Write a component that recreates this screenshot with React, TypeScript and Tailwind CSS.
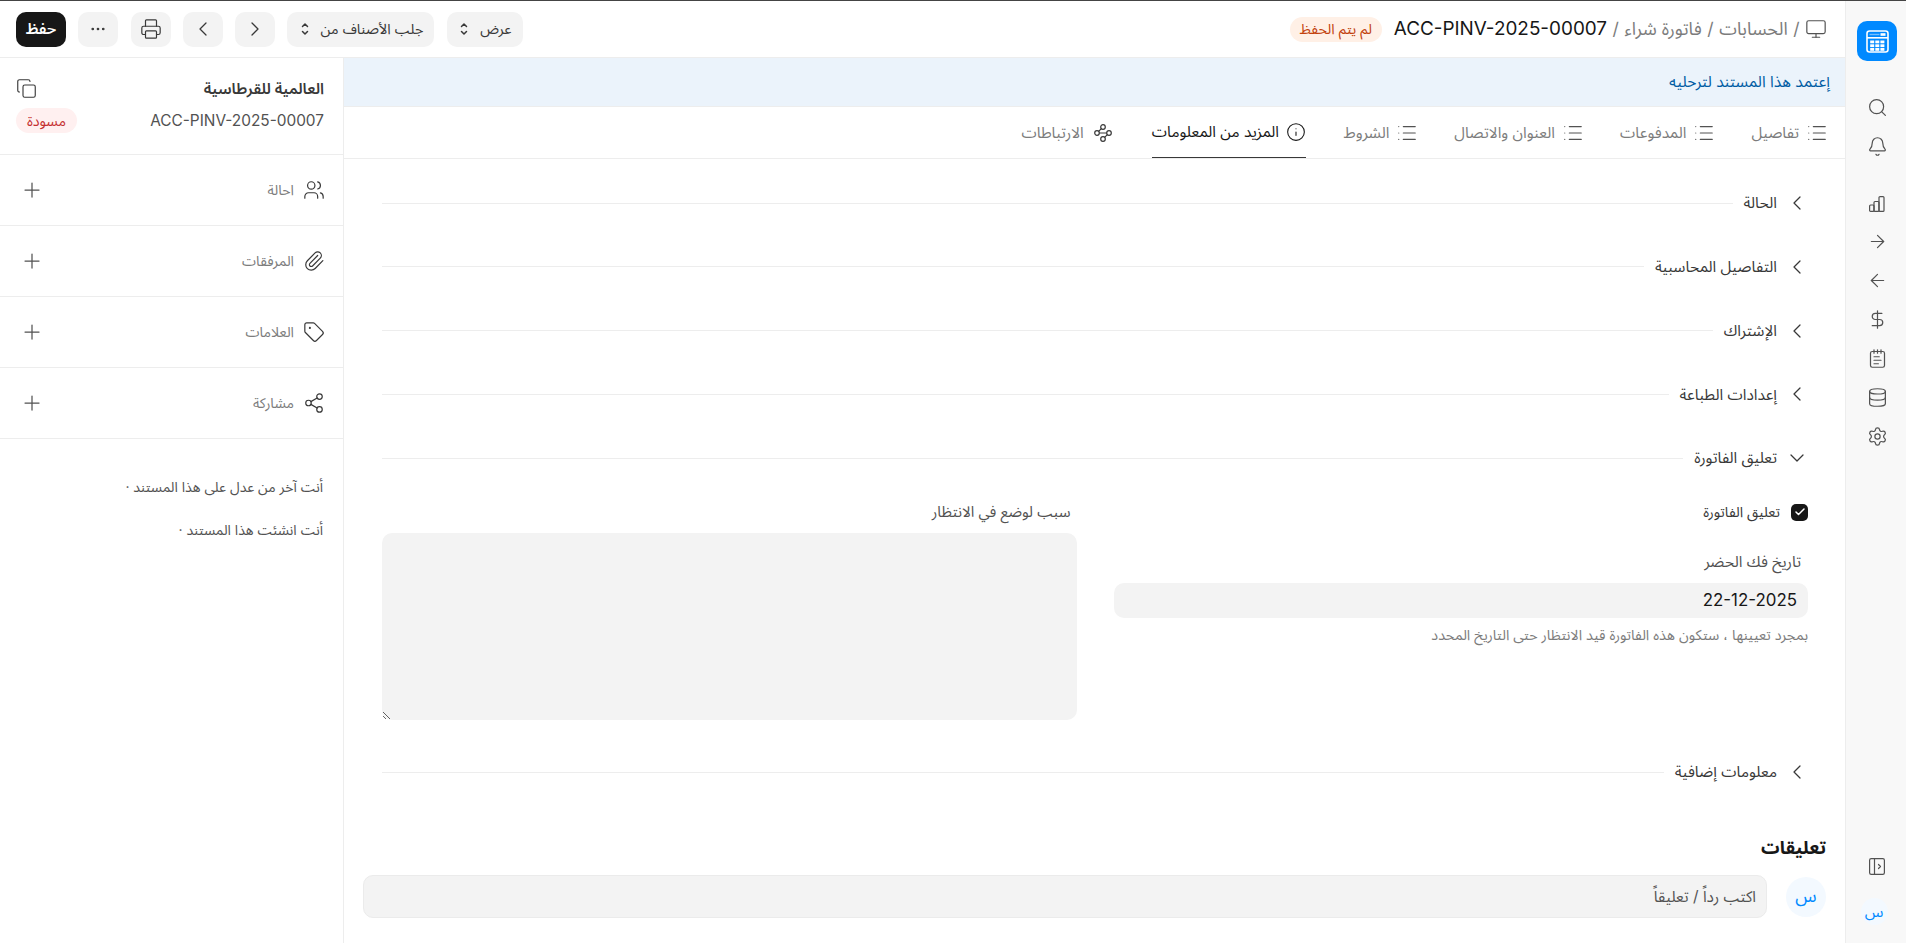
import React from "react";
import {
  Monitor, Search, Bell, ArrowRight, ArrowLeft, DollarSign, NotepadText, Database, Settings,
  ChevronLeft, ChevronRight, ChevronDown, Printer, Ellipsis, Copy, Users, Paperclip, Tag, Share2, Plus, List, Info, Check,
} from "lucide-react";

const FONT = "font-['Inter','Noto_Sans_Arabic','Noto_Sans','DejaVu_Sans',sans-serif]";

function UpDown() {
  return (
    <svg width="12" height="18" viewBox="0 0 12 18" fill="none" stroke="#383838" strokeWidth="1.5" strokeLinecap="round" strokeLinejoin="round">
      <path d="M3.5 6.5 6 4l2.5 2.5M3.5 11.5 6 14l2.5-2.5" />
    </svg>
  );
}

function Bars() {
  return (
    <svg width="16" height="18" viewBox="0 0 16 18" fill="none" stroke="#525252" strokeWidth="1.2">
      <rect x="0.6" y="10" width="4.4" height="6.4" rx="1" />
      <rect x="5" y="6.5" width="5" height="9.9" rx="1" />
      <rect x="10" y="1.6" width="5" height="14.8" rx="1" />
    </svg>
  );
}

function Links() {
  return (
    <svg width="18" height="18" viewBox="0 0 18 18" fill="none" stroke="#383838" strokeWidth="1.2">
      <circle cx="9" cy="3" r="2.3" />
      <circle cx="3" cy="9" r="2.3" />
      <circle cx="15" cy="9" r="2.3" />
      <circle cx="9" cy="15" r="2.3" />
      <path d="M5.3 9h7.4M7.4 4.6 4.6 7.4M13.4 10.6l-2.8 2.8" />
    </svg>
  );
}

function Toggle() {
  return (
    <svg width="16" height="17" viewBox="0 0 16 17" fill="none" stroke="#525252" strokeWidth="1.2" strokeLinejoin="round">
      <rect x="0.6" y="0.6" width="14.8" height="15.8" rx="1.6" />
      <path d="M5.5 0.6v15.8" />
      <path d="m9.5 6.5 2 2-2 2" strokeLinecap="round" />
    </svg>
  );
}

function Logo() {
  return (
    <div className="w-[40px] h-[40px] rounded-[10px] bg-[#0089ff] flex items-center justify-center">
      <svg width="23" height="23" viewBox="0 0 23 23" fill="none">
        <rect x="1" y="1" width="21" height="21" rx="2.5" stroke="#fff" strokeWidth="1.6" />
        <rect x="1" y="7" width="21" height="1.6" fill="#fff" />
        <rect x="14.5" y="3.2" width="5" height="2.6" fill="#fff" />
        <rect x="3.5" y="3.8" width="10" height="1.4" fill="#fff" fillOpacity="0.45" />
        {[10.5, 14.3, 18].map((y) =>
          [4.2, 9.3, 14.4].map((x) => <rect key={`${x}-${y}`} x={x} y={y} width="4" height="2.8" fill="#fff" />)
        )}
      </svg>
    </div>
  );
}

function Rail() {
  const c = { size: 21, strokeWidth: 1.4, color: "#525252" };
  return (
    <aside className="w-[61px] shrink-0 bg-[#f8f8f8] border-l border-[#ededed] flex flex-col items-center pl-[2px] pt-[20px] pb-[18px]">
      <Logo />
      <div className="mt-[36px] flex flex-col items-center gap-[18px]">
        <Search {...c} />
        <Bell {...c} />
      </div>
      <div className="mt-[38px] flex flex-col items-center gap-[18px]">
        <Bars />
        <ArrowRight {...c} />
        <ArrowLeft {...c} />
        <DollarSign {...c} />
        <NotepadText {...c} />
        <Database {...c} />
        <Settings {...c} />
      </div>
      <div className="mt-auto flex flex-col items-center gap-[23px]">
        <Toggle />
        <div className="w-[27px] h-[27px] mr-[6px] rounded-full bg-[#f3f9ff] text-[#0089ff] text-[15.4px] flex items-center justify-center">س</div>
      </div>
    </aside>
  );
}

function Btn({ children, className = "" }: { children: React.ReactNode; className?: string }) {
  return <div className={`h-[35px] rounded-[10px] bg-[#f3f3f3] flex items-center justify-center text-[#383838] text-[14.4px] ${className}`}>{children}</div>;
}

function Header() {
  const ic = { size: 24, strokeWidth: 1.25, color: "#383838" };
  return (
    <header className="h-[57px] shrink-0 border-b border-[#ededed] flex items-center pr-[18px] pl-[16px]">
      <div className="flex items-center gap-[5.5px] text-[17.9px] text-[#7c7c7c]">
        <Monitor size={22} strokeWidth={1.3} color="#525252" />
        <span className="text-[17.6px]">/</span>
        <span>الحسابات</span>
        <span className="text-[17.6px]">/</span>
        <span>فاتورة شراء</span>
        <span className="text-[17.6px]">/</span>
        <span className="text-[18.9px] text-[#171717]">ACC-PINV-2025-00007</span>
      </div>
      <span className="mr-[12px] h-[25px] w-[92px] rounded-full bg-[#fff0e6] text-[#c2410c] text-[14.3px] flex items-center justify-center">لم يتم الحفظ</span>
      <div className="mr-auto flex items-center gap-[12.3px]">
        <Btn className="w-[76px] gap-[10px]"><span>عرض</span><UpDown /></Btn>
        <Btn className="w-[147px] gap-[10px]"><span>جلب الأصناف من</span><UpDown /></Btn>
        <Btn className="w-[40px]"><ChevronRight {...ic} /></Btn>
        <Btn className="w-[40px]"><ChevronLeft {...ic} /></Btn>
        <Btn className="w-[40px]"><Printer size={22} strokeWidth={1.3} color="#383838" /></Btn>
        <Btn className="w-[40px]"><Ellipsis size={18} strokeWidth={1.6} color="#383838" /></Btn>
        <div className="w-[50px] h-[35px] rounded-[10px] bg-[#171717] text-white text-[15.4px] font-semibold flex items-center justify-center">حفظ</div>
      </div>
    </header>
  );
}

function Tabs() {
  const ic = { size: 22, strokeWidth: 1.25, color: "#525252" };
  const items: [string, React.ReactNode, string][] = [
    ["تفاصيل", <List {...ic} />, "gap-[7px] text-[#7c7c7c]"],
    ["المدفوعات", <List {...ic} />, "gap-[7px] text-[#7c7c7c]"],
    ["العنوان والاتصال", <List {...ic} />, "gap-[7px] text-[#7c7c7c]"],
    ["الشروط", <List {...ic} />, "gap-[7px] text-[#7c7c7c]"],
    ["المزيد من المعلومات", <Info size={20} strokeWidth={1.3} color="#171717" />, "gap-[7px] mr-[1.5px] text-[#171717] border-b-[1.5px] border-[#383838]"],
    ["الارتباطات", <Links />, "gap-[10.5px] mr-[3.5px] text-[#7c7c7c]"],
  ];
  return (
    <div className="h-[52px] shrink-0 border-b border-[#ededed] flex pr-[17px] gap-[36px]">
      {items.map(([t, icon, cls]) => (
        <div key={t} className={`h-[51px] flex items-center text-[15.4px] ${cls}`}>
          {icon}
          <span>{t}</span>
        </div>
      ))}
    </div>
  );
}

function Section({ title, open = false, className = "" }: { title: string; open?: boolean; className?: string }) {
  return (
    <div className={`h-[24px] flex items-center ${className}`}>
      {open ? (
        <ChevronDown size={24} strokeWidth={1.25} color="#383838" className="-mr-px" />
      ) : (
        <ChevronLeft size={24} strokeWidth={1.25} color="#383838" className="-mr-px" />
      )}
      <span className="mr-[8px] text-[15.4px] text-[#383838] whitespace-nowrap">{title}</span>
      <div className="flex-1 h-px bg-[#ededed] mr-[11px]" />
    </div>
  );
}

function Form() {
  return (
    <div className="pr-[37px] pl-[38px] pt-[32px]">
      <Section title="الحالة" className="mb-[39.75px]" />
      <Section title="التفاصيل المحاسبية" className="mb-[39.75px]" />
      <Section title="الإشتراك" className="mb-[39.75px]" />
      <Section title="إعدادات الطباعة" className="mb-[39.75px]" />
      <Section title="تعليق الفاتورة" open />
      <div className="grid grid-cols-2 gap-[37px] mt-[30px]">
        <div>
          <label className="flex items-center gap-[11px] h-[24px] text-[14.3px] text-[#383838]">
            <span className="w-[17px] h-[17px] rounded-[5px] bg-[#171717] flex items-center justify-center">
              <Check size={12} strokeWidth={3} color="#fff" />
            </span>
            تعليق الفاتورة
          </label>
          <div className="mt-[26px] pr-[7px] h-[24px] text-[15.4px] text-[#525252] flex items-center">تاريخ فك الحضر</div>
          <div className="mt-[9px] h-[35px] rounded-[10px] bg-[#f3f3f3] px-[11px] flex items-center text-[16.9px] text-[#171717]">
            <span dir="ltr">22-12-2025</span>
          </div>
          <p className="mt-[6px] text-[14.3px] text-[#7c7c7c]">بمجرد تعيينها ، ستكون هذه الفاتورة قيد الانتظار حتى التاريخ المحدد</p>
        </div>
        <div>
          <div className="pr-[6px] h-[24px] text-[15px] text-[#525252] flex items-center">سبب لوضع في الانتظار</div>
          <textarea className="block mt-[9px] w-full h-[187px] rounded-[10px] bg-[#f3f3f3] outline-none" />
        </div>
      </div>
      <Section title="معلومات إضافية" className="mt-[40px]" />
    </div>
  );
}

function Comments() {
  return (
    <div className="px-[19px] mt-[48px]">
      <h2 className="text-[18.4px] leading-[30px] font-bold text-[#171717]">تعليقات</h2>
      <div className="mt-[13px] flex items-center gap-[19px]">
        <div className="w-[40px] h-[40px] rounded-full bg-[#f3f9ff] text-[#0089ff] text-[17.6px] flex items-center justify-center shrink-0">س</div>
        <div className="flex-1 h-[43px] rounded-[10px] bg-[#f3f3f3] border border-[#ebebeb] px-[10px] flex items-center text-[15.4px] text-[#525252]">
          اكتب رداً / تعليقاً
        </div>
      </div>
    </div>
  );
}

function SideRow({ icon, label }: { icon: React.ReactNode; label: string }) {
  return (
    <div className="h-[71px] border-b border-[#ededed] flex items-center pr-[18px] pl-[20px] gap-[9px] text-[14.2px] text-[#7c7c7c]">
      {icon}
      <span>{label}</span>
      <Plus size={24} strokeWidth={1.25} color="#525252" className="mr-auto" />
    </div>
  );
}

function Side() {
  const ic = { size: 22, strokeWidth: 1.3, color: "#383838" };
  return (
    <aside className="w-[344px] shrink-0 border-r border-[#ededed]">
      <div className="h-[97px] border-b border-[#ededed] pr-[19px] pl-[16px] pt-[20px]">
        <div className="flex items-center justify-between h-[21px]">
          <span className="text-[15.4px] font-semibold text-[#383838]">العالمية للقرطاسية</span>
          <Copy size={21} strokeWidth={1.3} color="#383838" />
        </div>
        <div className="flex items-center justify-between mt-[9px] h-[25px]">
          <span className="text-[15.4px] text-[#525252]">ACC-PINV-2025-00007</span>
          <span className="w-[61px] h-[25px] rounded-full bg-[#fff0f0] text-[#c53030] text-[14.3px] flex items-center justify-center">مسودة</span>
        </div>
      </div>
      <SideRow icon={<Users {...ic} />} label="احالة" />
      <SideRow icon={<Paperclip {...ic} />} label="المرفقات" />
      <SideRow icon={<Tag {...ic} />} label="العلامات" />
      <SideRow icon={<Share2 {...ic} />} label="مشاركة" />
      <div className="pr-[20px] pt-[37px] text-[14px] text-[#525252] flex flex-col gap-[22px]">
        <div className="h-[21px]">أنت آخر من عدل على هذا المستند ·</div>
        <div className="h-[21px]">أنت انشئت هذا المستند ·</div>
      </div>
    </aside>
  );
}

export default function App() {
  return (
    <div dir="rtl" className={`${FONT} w-full h-[943px] overflow-hidden bg-white border-t border-[#444] flex`}>
      <Rail />
      <div className="flex-1 min-w-0 flex flex-col">
        <Header />
        <div className="flex-1 min-h-0 flex">
          <main className="flex-1 min-w-0 flex flex-col">
            <div className="h-[49px] shrink-0 bg-[#ebf3fb] border-b border-[#ededed] pr-[15px] flex items-center text-[15.6px] text-[#005ca3]">إعتمد هذا المستند لترحليه</div>
            <Tabs />
            <Form />
            <Comments />
          </main>
          <Side />
        </div>
      </div>
    </div>
  );
}
